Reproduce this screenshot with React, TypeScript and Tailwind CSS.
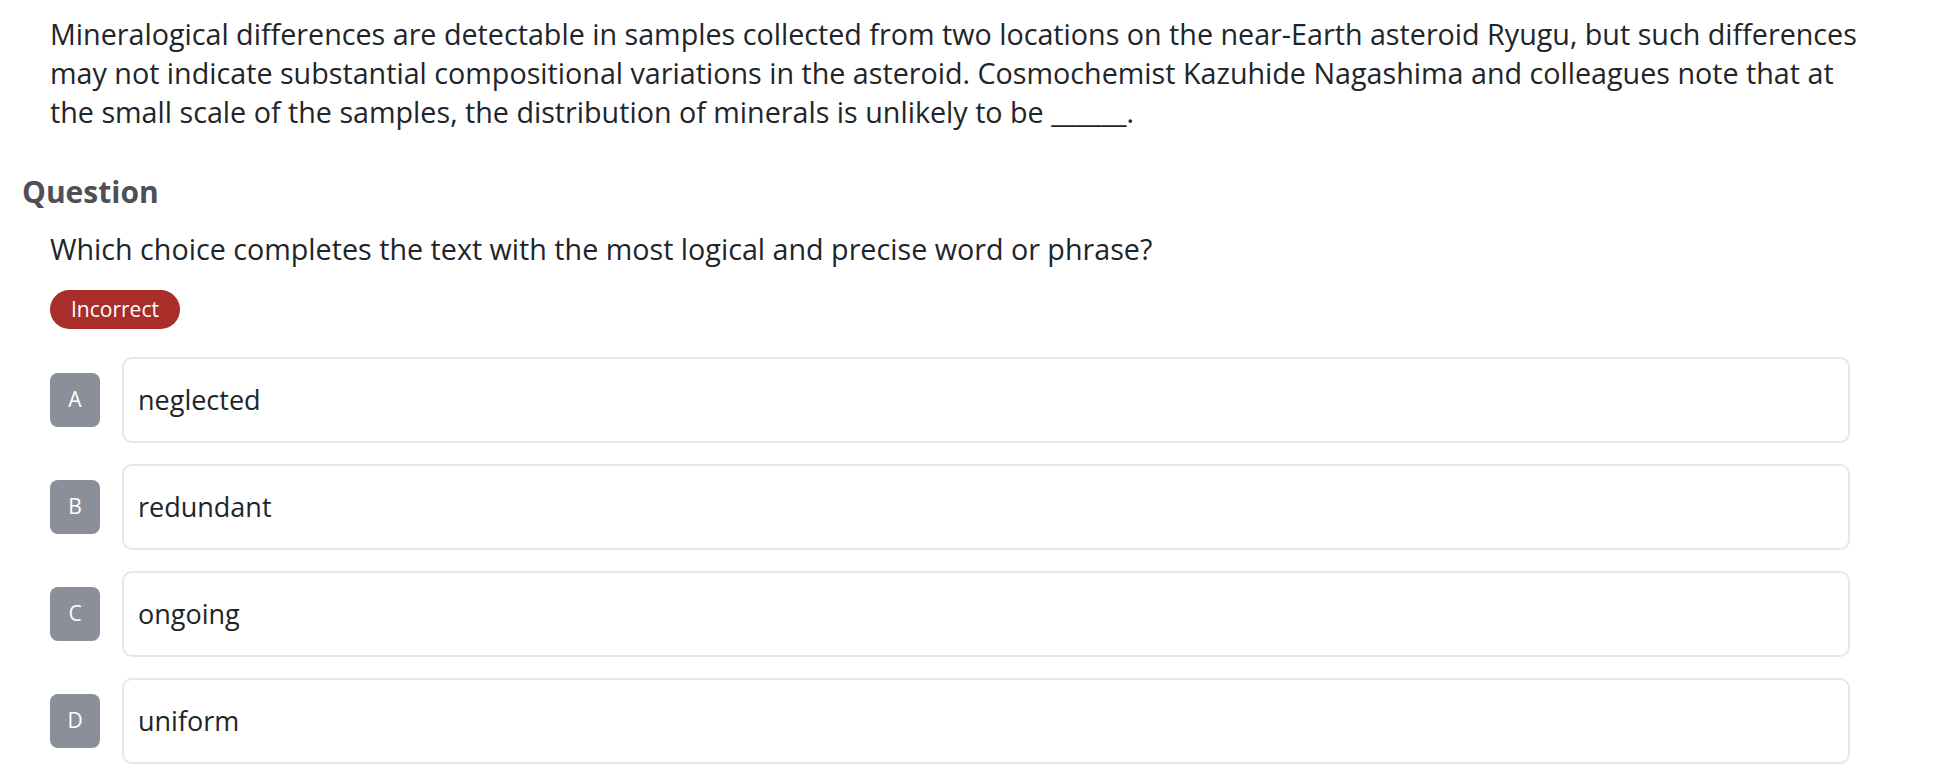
import React from 'react';

const choices = [
    { letter: 'A', text: 'neglected' },
    { letter: 'B', text: 'redundant' },
    { letter: 'C', text: 'ongoing' },
    { letter: 'D', text: 'uniform' },
];

export default function App() {
    return (
        <div className="min-h-screen bg-white font-['Open_Sans',sans-serif] text-[#212529]">
            <div className="pt-[14px] pl-[50px] pr-[66px]">
                <p className="text-[28.7px] leading-[39px]">
                    Mineralogical differences are detectable in samples collected from two locations on the near-Earth asteroid Ryugu, but such differences may not indicate substantial compositional variations in the asteroid. Cosmochemist Kazuhide Nagashima and colleagues note that at the small scale of the samples, the distribution of minerals is unlikely to be ______.
                </p>
            </div>

            <h2 className="mt-[43px] pl-[22px] text-[30px] leading-[36px] font-bold text-[#4e4f58]">Question</h2>

            <div className="pl-[50px] pr-[86px]">
                <p className="mt-[19px] text-[28.7px] leading-[39px]">
                    Which choice completes the text with the most logical and precise word or phrase?
                </p>

                <div className="mt-[22px]">
                    <span className="inline-flex h-[39px] items-center rounded-full bg-[#a92d28] px-[21px] text-[21px] text-white">
                        Incorrect
                    </span>
                </div>

                <div className="mt-[28px] flex flex-col gap-[21px]">
                    {choices.map(c => (
                        <div key={c.letter} className="flex items-center gap-[22px]">
                            <div className="flex h-[54px] w-[50px] shrink-0 items-center justify-center rounded-[8px] bg-[#8b8f99] text-[21px] text-white">
                                {c.letter}
                            </div>
                            <div className="flex h-[86px] flex-1 items-center rounded-[10px] border-2 border-[#e6e7eb] px-[14px] text-[27px]">
                                {c.text}
                            </div>
                        </div>
                    ))}
                </div>
            </div>
        </div>
    );
}
